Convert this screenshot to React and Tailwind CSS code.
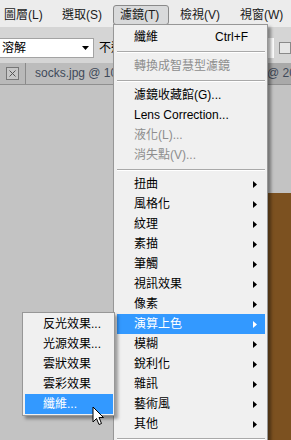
const FILTER_MENU = [
  { label: '纖維', shortcut: 'Ctrl+F' },
  { sep: true },
  { label: '轉換成智慧型濾鏡', disabled: true },
  { sep: true },
  { label: '濾鏡收藏館(G)...' },
  { label: 'Lens Correction...' },
  { label: '液化(L)...', disabled: true },
  { label: '消失點(V)...', disabled: true },
  { sep: true },
  { label: '扭曲', sub: true },
  { label: '風格化', sub: true },
  { label: '紋理', sub: true },
  { label: '素描', sub: true },
  { label: '筆觸', sub: true },
  { label: '視訊效果', sub: true },
  { label: '像素', sub: true },
  { label: '演算上色', sub: true, active: true },
  { label: '模糊', sub: true },
  { label: '銳利化', sub: true },
  { label: '雜訊', sub: true },
  { label: '藝術風', sub: true },
  { label: '其他', sub: true },
  { sep: true },
]

const RENDER_SUBMENU = [
  { label: '反光效果...' },
  { label: '光源效果...' },
  { label: '雲狀效果' },
  { label: '雲彩效果' },
  { label: '纖維...', active: true },
]

function Arrow({ active }) {
  return (
    <svg width="4" height="7" viewBox="0 0 4 7" className="shrink-0">
      <polygon points="0,0 4,3.5 0,7" fill={active ? '#ffffff' : '#000000'} />
    </svg>
  )
}

function Separator() {
  return (
    <div className="h-[9px] flex flex-col justify-center ml-[3px] mr-[2px]">
      <div className="h-px bg-[#a9a9a9]" />
      <div className="h-px bg-white" />
    </div>
  )
}

function MenuRow({ item }) {
  const tone = item.active
    ? 'bg-[#3399ff] text-white'
    : item.disabled
      ? 'text-[#8d8d8d]'
      : 'text-black'
  return (
    <div className={`h-[20px] ml-[3px] mr-[2px] flex items-center pl-[17px] pr-[8px] ${tone}`}>
      <span className="flex-1 leading-[20px] whitespace-nowrap">{item.label}</span>
      {item.shortcut && <span className="pr-[9px] leading-[20px]">{item.shortcut}</span>}
      {item.sub && <Arrow active={item.active} />}
    </div>
  )
}

function Cursor() {
  return (
    <svg width="13" height="20" viewBox="0 0 13 20" className="absolute left-[92px] top-[406px]">
      <path
        d="M1 1 L1 16 L4.5 12.5 L7 18.5 L9.5 17.5 L7 11.5 L11.5 11.5 Z"
        fill="#ffffff"
        stroke="#000000"
        strokeWidth="1"
      />
    </svg>
  )
}

export default function App() {
  return (
    <div className="relative w-[291px] h-[440px] overflow-hidden flex flex-col text-[12px] font-['Liberation_Sans','Noto_Sans_CJK_TC',sans-serif] bg-[#c3c3c3]">
      {/* Menu bar */}
      <div className="h-[27px] shrink-0 bg-[#ececec] flex items-start text-[#1a1a1a] whitespace-nowrap">
        <div className="mt-[5px] ml-[4px] w-[58px] leading-[20px]">圖層(L)</div>
        <div className="mt-[5px] w-[51px] leading-[20px]">選取(S)</div>
        <div className="mt-[5px] w-[56px] h-[20px] rounded-[3px] border border-[#8a8a8a] bg-[#d9dadb] pl-[6px] leading-[18px]">濾鏡(T)</div>
        <div className="mt-[5px] ml-[11px] w-[60px] leading-[20px]">檢視(V)</div>
        <div className="mt-[5px] leading-[20px]">視窗(W)</div>
      </div>

      {/* Options bar */}
      <div className="h-[36px] shrink-0 bg-[#d5d5d5] flex items-start whitespace-nowrap">
        <div className="mt-[11px] w-[101px] h-[20px] bg-white border border-l-0 border-[#a3a3a3] flex items-center pl-[2px] pr-[4px]">
          <span className="flex-1 leading-[18px] text-black">溶解</span>
          <svg width="7" height="4" viewBox="0 0 7 4">
            <polygon points="0,0 7,0 3.5,4" fill="#000" />
          </svg>
        </div>
        <div className="mt-[11px] ml-[5px] w-[40px] leading-[20px] text-black">不透明度:</div>
        <div className="mt-[11px] ml-[124px] w-[12px] h-[20px] bg-white" />
        <div className="mt-[15px] ml-[5px] w-[12px] h-[12px] border border-[#8a8a8a] bg-[#e6e6e6] shrink-0" />
      </div>

      {/* Document tabs */}
      <div className="h-[22px] shrink-0 bg-[#a9a9a9] border-b border-[#8f8f8f] flex items-stretch whitespace-nowrap text-[#3f4a5a]">
        <div className="w-[25px] shrink-0 bg-[#b9b9b9] flex items-center justify-center">
          <div className="w-[13px] h-[13px] border border-[#767676] bg-[#c6c6c6] flex items-center justify-center">
            <svg width="7" height="7" viewBox="0 0 7 7">
              <path d="M0.5 0.5 L6.5 6.5 M6.5 0.5 L0.5 6.5" stroke="#555" strokeWidth="1" />
            </svg>
          </div>
        </div>
        <div className="w-[181px] shrink-0 border-l border-[#8a8a8a] bg-[#bcbcbc] pl-[9px] leading-[21px] overflow-hidden">
          socks.jpg @ 100% (RGB/8)
        </div>
        <div className="shrink-0 pl-[7px] leading-[21px]">flower.jpg @ 20%</div>
      </div>

      {/* Canvas area */}
      <div className="flex-1 flex justify-end">
        <div className="mt-[108px] w-[23px] bg-[#7c5120]" />
      </div>

      {/* Filter menu */}
      <div className="absolute left-[113px] top-[24px] w-[155px] h-[430px] bg-[#f0f0f0] border border-[#979797] pt-[2px] shadow-[3px_3px_3px_rgba(0,0,0,0.4)]">
        {FILTER_MENU.map((item, i) =>
          item.sep ? <Separator key={i} /> : <MenuRow key={i} item={item} />
        )}
      </div>

      {/* Render submenu */}
      <div className="absolute left-[22px] top-[312px] w-[93px] bg-[#f0f0f0] border border-[#979797] py-[1px] shadow-[3px_3px_3px_rgba(0,0,0,0.35)]">
        {RENDER_SUBMENU.map((item) => (
          <div
            key={item.label}
            className={`h-[20px] ml-[2px] mr-[1px] pl-[18px] leading-[20px] whitespace-nowrap ${item.active ? 'bg-[#3399ff] text-white' : 'text-black'}`}
          >
            {item.label}
          </div>
        ))}
      </div>

      <Cursor />
    </div>
  )
}
